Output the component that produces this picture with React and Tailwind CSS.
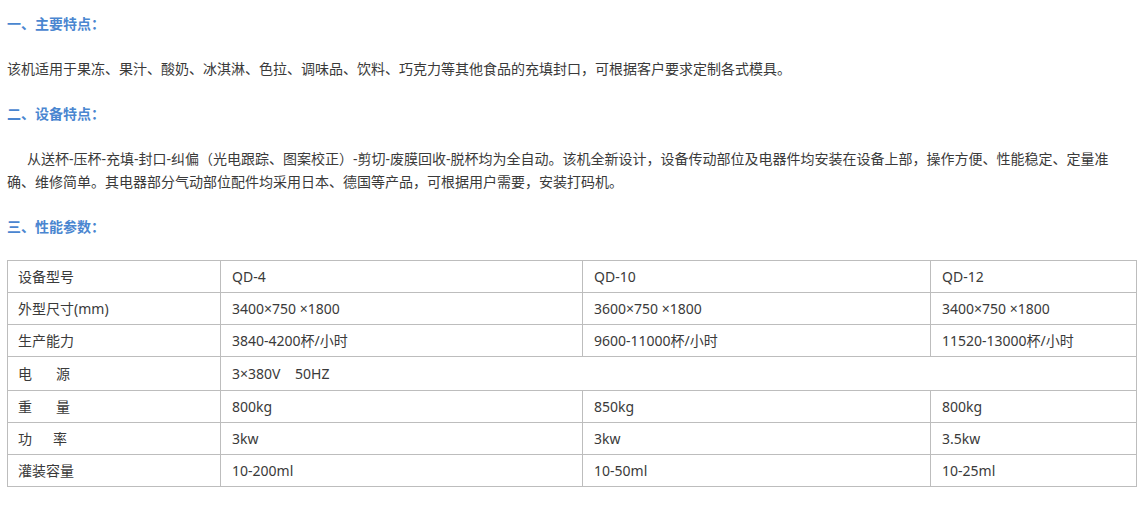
const rows = [
  { label: '设备型号', cells: ['QD-4', 'QD-10', 'QD-12'] },
  { label: '外型尺寸(mm)', cells: ['3400×750 ×1800', '3600×750 ×1800', '3400×750 ×1800'] },
  { label: '生产能力', cells: ['3840-4200杯/小时', '9600-11000杯/小时', '11520-13000杯/小时'] },
  { label: ['电', '源'], gap: 'gap-[24px]', span: '3×380V    50HZ', tall: true },
  { label: ['重', '量'], gap: 'gap-[24px]', cells: ['800kg', '850kg', '800kg'] },
  { label: ['功', '率'], gap: 'gap-[21px]', cells: ['3kw', '3kw', '3.5kw'] },
  { label: '灌装容量', cells: ['10-200ml', '10-50ml', '10-25ml'] },
];

const Heading = ({ children }) => (
  <p className="mb-[22px] font-bold text-[#4a86d0]">{children}</p>
);

const Label = ({ row }) => {
  if (typeof row.label === 'string') return row.label;
  return (
    <span className={`inline-flex ${row.gap}`}>
      {row.label.map((ch) => <span key={ch}>{ch}</span>)}
    </span>
  );
};

export default function App() {
  return (
    <div
      className="min-h-[529px] bg-white pt-[12px] pl-[7px] pr-[6px] text-[14px] leading-[23px] text-[#3a3a3a]"
      style={{ fontFamily: '"Noto Sans", "Noto Sans CJK SC", sans-serif' }}
    >
      <Heading>一、主要特点：</Heading>
      <p className="mb-[22px]">
        该机适用于果冻、果汁、酸奶、冰淇淋、色拉、调味品、饮料、巧克力等其他食品的充填封口，可根据客户要求定制各式模具。
      </p>

      <Heading>二、设备特点：</Heading>
      <p className="mb-[22px] indent-[20px]">
        从送杯-压杯-充填-封口-纠偏（光电跟踪、图案校正）-剪切-废膜回收-脱杯均为全自动。该机全新设计，设备传动部位及电器件均安装在设备上部，操作方便、性能稳定、定量准确、维修简单。其电器部分气动部位配件均采用日本、德国等产品，可根据用户需要，安装打码机。
      </p>

      <Heading>三、性能参数：</Heading>

      <table className="w-[1129px] table-fixed border-collapse">
        <colgroup>
          <col className="w-[213px]" />
          <col className="w-[362px]" />
          <col className="w-[348px]" />
          <col className="w-[206px]" />
        </colgroup>
        <tbody>
          {rows.map((row, i) => (
            <tr key={i} className={row.tall ? 'h-[34px]' : 'h-[32px]'}>
              <td className="border border-[#bdbdbd] pl-[10px] align-middle">
                <Label row={row} />
              </td>
              {row.span ? (
                <td colSpan={3} className="border border-[#bdbdbd] pl-[11px] align-middle whitespace-pre">
                  {row.span}
                </td>
              ) : (
                row.cells.map((c, j) => (
                  <td key={j} className="border border-[#bdbdbd] pl-[11px] align-middle">
                    {c}
                  </td>
                ))
              )}
            </tr>
          ))}
        </tbody>
      </table>
    </div>
  );
}
